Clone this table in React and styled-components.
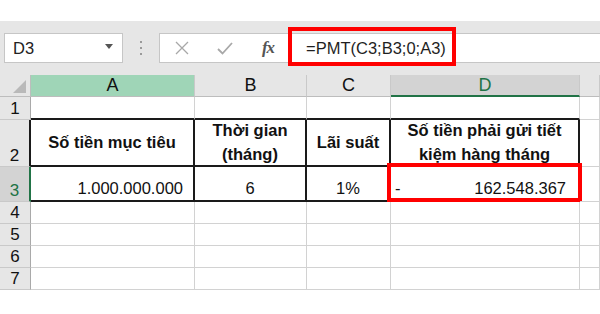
import React from "react";
import styled, { createGlobalStyle } from "styled-components";

const GlobalStyle = createGlobalStyle`
  html, body {
    margin: 0;
    padding: 0;
    background: #fff;
    overflow: hidden;
  }
  body {
    font-family: "Liberation Sans", Arial, sans-serif;
    color: #000;
  }
`;

const GREEN = "#217346";
const GRID = "#d2d2d2";
const DARK = "2px solid #1a1a1a";

const Page = styled.div`
  width: 600px;
  height: 314px;
  padding-top: 21px;
  box-sizing: border-box;
  background: #fff;
`;

const Toolbar = styled.div`
  height: 54px;
  background: #e6e6e6;
  display: flex;
  align-items: center;
  padding-left: 4px;
`;

const NameBox = styled.div`
  width: 119px;
  height: 30px;
  box-sizing: border-box;
  background: #fff;
  border: 1px solid #c6c6c6;
  display: flex;
  align-items: center;
  justify-content: space-between;
  padding: 0 9px 0 8px;
  font-size: 16.5px;
  color: #222;
`;

const Caret = styled.span`
  width: 0;
  height: 0;
  border-left: 4px solid transparent;
  border-right: 4px solid transparent;
  border-top: 5px solid #555;
  margin-bottom: 3px;
`;

const Grip = styled.div`
  width: 36px;
  display: flex;
  flex-direction: column;
  align-items: center;
  gap: 4px;
`;

const Dot = styled.span`
  width: 2px;
  height: 2px;
  background: #9a9a9a;
`;

const FormulaBox = styled.div`
  flex: 1;
  height: 30px;
  box-sizing: border-box;
  background: #fff;
  border: 1px solid #c6c6c6;
  border-right: none;
  display: flex;
  align-items: center;
`;

const ToolButton = styled.div`
  width: ${(p) => p.$w}px;
  height: 100%;
  display: flex;
  align-items: center;
  justify-content: center;
  color: #a8a8a8;
`;

const Fx = styled.span`
  font-family: "Liberation Serif", "Times New Roman", serif;
  font-style: italic;
  font-weight: bold;
  font-size: 17px;
  color: #555;
  letter-spacing: -1px;
`;

const FormulaInput = styled.div`
  position: relative;
  flex: 1;
  height: 100%;
  display: flex;
  align-items: center;
  padding-left: 16px;
  font-size: 16.5px;
  color: #1f1f1f;
`;

const Highlight = styled.div`
  position: absolute;
  box-sizing: border-box;
  border: 4px solid #f00;
  pointer-events: none;
  top: ${(p) => p.$t}px;
  left: ${(p) => p.$l}px;
  width: ${(p) => p.$w}px;
  height: ${(p) => p.$h}px;
`;

const Sheet = styled.div`
  display: grid;
  grid-template-columns: 31px 164px 112px 84px 189px 1fr;
  grid-template-rows: 22px 23px 47px 35px 22px 22px 22px 22px;
`;

const Corner = styled.div`
  background: #e6e6e6;
  border-right: 1px solid #bdbdbd;
  border-bottom: 1px solid #bdbdbd;
  position: relative;
  &::after {
    content: "";
    position: absolute;
    right: 4px;
    bottom: 3px;
    border-left: 13px solid transparent;
    border-bottom: 13px solid #b9b9b9;
  }
`;

const ColHead = styled.div`
  background: ${(p) => p.$bg || "#e6e6e6"};
  color: ${(p) => p.$color || "#111"};
  border-right: 1px solid #c9c9c9;
  border-bottom: ${(p) => p.$line || "1px solid #bdbdbd"};
  display: flex;
  align-items: center;
  justify-content: center;
  font-size: 18px;
`;

const RowHead = styled.div`
  background: ${(p) => (p.$active ? "#d3d3d3" : "#e6e6e6")};
  color: ${(p) => (p.$active ? GREEN : "#111")};
  border-right: ${(p) => p.$right || "1px solid #a9a9a9"};
  border-bottom: 1px solid #c9c9c9;
  display: flex;
  align-items: flex-end;
  justify-content: center;
  line-height: 21px;
  font-size: 17px;
`;

const Cell = styled.div`
  position: relative;
  border-right: ${(p) => p.$right || `1px solid ${GRID}`};
  border-bottom: ${(p) => p.$bottom || `1px solid ${GRID}`};
  display: flex;
  align-items: ${(p) => (p.$bold ? "center" : "flex-end")};
  justify-content: ${(p) => p.$align || "center"};
  text-align: center;
  padding: ${(p) => p.$pad || "0 0 1px"};
  font-size: 16.5px;
  font-weight: ${(p) => (p.$bold ? "bold" : "normal")};
  line-height: ${(p) => (p.$bold ? "24px" : "21px")};
  color: #111;
`;

const Accounting = styled.div`
  flex: 1;
  display: flex;
  justify-content: space-between;
`;

function CrossIcon() {
  return (
    <svg width="14" height="14" viewBox="0 0 14 14">
      <path d="M1 1L13 13M13 1L1 13" stroke="currentColor" strokeWidth="1.3" fill="none" />
    </svg>
  );
}

function CheckIcon() {
  return (
    <svg width="16" height="13" viewBox="0 0 16 13">
      <path d="M1 7L5.5 11.5L15 1" stroke="currentColor" strokeWidth="1.8" fill="none" />
    </svg>
  );
}

const columns = ["A", "B", "C", "D", ""];
const emptyRows = [4, 5, 6, 7];

export default function App() {
  return (
    <Page>
      <GlobalStyle />
      <Toolbar>
        <NameBox>
          D3
          <Caret />
        </NameBox>
        <Grip>
          <Dot />
          <Dot />
          <Dot />
        </Grip>
        <FormulaBox>
          <ToolButton $w={44}>
            <CrossIcon />
          </ToolButton>
          <ToolButton $w={42}>
            <CheckIcon />
          </ToolButton>
          <ToolButton $w={44}>
            <Fx>fx</Fx>
          </ToolButton>
          <FormulaInput>
            =PMT(C3;B3;0;A3)
            <Highlight $t={-7} $l={-2} $w={168} $h={39} />
          </FormulaInput>
        </FormulaBox>
      </Toolbar>

      <Sheet>
        <Corner />
        {columns.map((c) => (
          <ColHead
            key={c || "E"}
            $bg={c === "A" ? "#9fd5b7" : c === "D" ? "#d3d3d3" : undefined}
            $color={c === "D" ? GREEN : undefined}
            $line={c === "D" ? `2px solid ${GREEN}` : undefined}
          >
            {c}
          </ColHead>
        ))}

        <RowHead>1</RowHead>
        <Cell $bottom={DARK} />
        <Cell $bottom={DARK} />
        <Cell $bottom={DARK} />
        <Cell $bottom={DARK} />
        <Cell />

        <RowHead $right={DARK}>2</RowHead>
        <Cell $bold $right={DARK} $bottom={DARK}>
          Số tiền mục tiêu
        </Cell>
        <Cell $bold $right={DARK} $bottom={DARK}>
          Thời gian
          <br />
          (tháng)
        </Cell>
        <Cell $bold $right={DARK} $bottom={DARK}>
          Lãi suất
        </Cell>
        <Cell $bold $right={DARK} $bottom={DARK}>
          Số tiền phải gửi tiết
          <br />
          kiệm hàng tháng
        </Cell>
        <Cell />

        <RowHead $active $right={`2px solid ${GREEN}`}>
          3
        </RowHead>
        <Cell $align="flex-end" $pad="0 10px 1px 0" $right={DARK} $bottom={DARK}>
          1.000.000.000
        </Cell>
        <Cell $right={DARK} $bottom={DARK}>
          6
        </Cell>
        <Cell $right={DARK} $bottom={DARK}>
          1%
        </Cell>
        <Cell $pad="0 12px 1px 4px" $right={DARK} $bottom={DARK}>
          <Accounting>
            <span>-</span>
            <span>162.548.367</span>
          </Accounting>
          <Highlight $t={-4} $l={-4} $w={195} $h={39} />
        </Cell>
        <Cell />

        {emptyRows.map((r) => (
          <React.Fragment key={r}>
            <RowHead>{r}</RowHead>
            <Cell />
            <Cell />
            <Cell />
            <Cell />
            <Cell />
          </React.Fragment>
        ))}
      </Sheet>
    </Page>
  );
}
